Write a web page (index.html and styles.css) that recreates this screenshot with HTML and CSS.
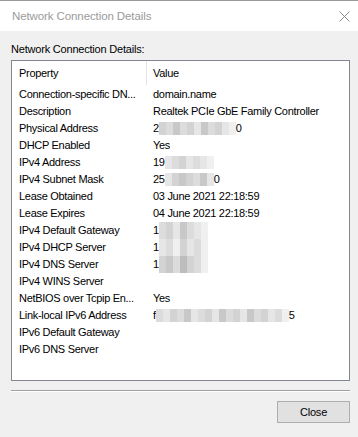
FILE: index.html
```html
<!DOCTYPE html>
<html>
<head>
<meta charset="utf-8">
<link rel="stylesheet" href="styles.css">
</head>
<body>
<div class="window">
  <div class="titlebar">
    <span class="title">Network Connection Details</span>
    <svg class="close-x" width="11" height="11" viewBox="0 0 11 11"><path d="M0.5 0.5 L10.5 10.5 M10.5 0.5 L0.5 10.5" stroke="#8a8a8a" stroke-width="1" fill="none"/></svg>
  </div>
  <div class="content">
    <div class="label">Network Connection Details:</div>
    <div class="listbox">
      <div class="header">
        <div class="hcell hprop">Property</div>
        <div class="hcell hval">Value</div>
      </div>
      <div class="rows">
        <div class="p">Connection-specific DN...</div><div class="v">domain.name</div>
        <div class="p">Description</div><div class="v">Realtek PCIe GbE Family Controller</div>
        <div class="p">Physical Address</div><div class="v">2<span class="mask m1"><i class="c2"></i><i class="c3"></i><i class="c1"></i><i class="c3"></i><i class="c2"></i><i class="c4"></i><i class="c1"></i><i class="c3"></i><i class="c2"></i><i class="c4"></i><i class="c5"></i></span>0</div>
        <div class="p">DHCP Enabled</div><div class="v">Yes</div>
        <div class="p">IPv4 Address</div><div class="v">19<span class="mask m2"><i class="c4"></i><i class="c3"></i><i class="c2"></i><i class="c4"></i><i class="c3"></i><i class="c4"></i><i class="c5"></i></span></div>
        <div class="p">IPv4 Subnet Mask</div><div class="v">25<span class="mask m2"><i class="c4"></i><i class="c2"></i><i class="c1"></i><i class="c2"></i><i class="c3"></i><i class="c1"></i><i class="c4"></i></span>0</div>
        <div class="p">Lease Obtained</div><div class="v">03 June 2021 22:18:59</div>
        <div class="p">Lease Expires</div><div class="v">04 June 2021 22:18:59</div>
        <div class="p">IPv4 Default Gateway</div><div class="v">1<span class="mask m3"><i class="c3"></i><i class="c2"></i><i class="c4"></i><i class="c1"></i><i class="c3"></i><i class="c4"></i><i class="c5"></i></span></div>
        <div class="p">IPv4 DHCP Server</div><div class="v">1<span class="mask m3"><i class="c4"></i><i class="c3"></i><i class="c5"></i><i class="c2"></i><i class="c4"></i><i class="c3"></i><i class="c5"></i></span></div>
        <div class="p">IPv4 DNS Server</div><div class="v">1<span class="mask m3 mlast"><i class="c2"></i><i class="c1"></i><i class="c3"></i><i class="c0"></i><i class="c2"></i><i class="c3"></i><i class="c5"></i></span></div>
        <div class="p">IPv4 WINS Server</div><div class="v"></div>
        <div class="p">NetBIOS over Tcpip En...</div><div class="v">Yes</div>
        <div class="p">Link-local IPv6 Address</div><div class="v">f<span class="mask m4"><i class="c3"></i><i class="c4"></i><i class="c2"></i><i class="c3"></i><i class="c1"></i><i class="c4"></i><i class="c3"></i><i class="c2"></i><i class="c4"></i><i class="c1"></i><i class="c3"></i><i class="c2"></i><i class="c4"></i><i class="c1"></i><i class="c3"></i><i class="c2"></i><i class="c4"></i><i class="c3"></i><i class="c5"></i></span>5</div>
        <div class="p">IPv6 Default Gateway</div><div class="v"></div>
        <div class="p">IPv6 DNS Server</div><div class="v"></div>
      </div>
    </div>
    <div class="separator"></div>
    <div class="footer">
      <button class="btn">Close</button>
    </div>
  </div>
</div>
</body>
</html>
```
FILE: styles.css
```css
html, body {
  margin: 0;
  padding: 0;
  background: #f0f0f0;
}
.window {
  width: 358px;
  height: 437px;
  box-sizing: border-box;
  border-top: 1px solid #9a9a9a;
  background: #f0f0f0;
  font-family: "Liberation Sans", Arial, sans-serif;
  font-size: 11px;
  letter-spacing: -0.3px;
  color: #000;
  overflow: hidden;
}
.titlebar {
  height: 30px;
  background: #fff;
  display: flex;
  align-items: center;
  justify-content: space-between;
  padding: 0 8px 0 12px;
}
.title {
  font-size: 11.5px;
  letter-spacing: -0.1px;
  color: #9b9b9b;
}
.close-x {
  display: block;
}
.content {
  padding: 0 8px 0 11px;
}
.label {
  margin-top: 11px;
  line-height: 15px;
  margin-bottom: 3px;
  letter-spacing: -0.2px;
}
.listbox {
  height: 321px;
  box-sizing: border-box;
  border: 1px solid #828790;
  background: #fff;
}
.header {
  display: flex;
  height: 24px;
  line-height: 24px;
}
.hprop {
  width: 135px;
  box-sizing: border-box;
  padding-left: 7px;
  border-right: 1px solid #e5e5e5;
}
.hval {
  padding-left: 6px;
}
.rows {
  display: grid;
  grid-template-columns: 135px 1fr;
  grid-auto-rows: 17px;
  line-height: 17px;
  padding-top: 1px;
}
.p {
  padding-left: 7px;
  white-space: nowrap;
  overflow: hidden;
}
.v {
  padding-left: 6px;
  white-space: nowrap;
}
.mask {
  display: inline-flex;
  vertical-align: top;
  margin-top: 2px;
  height: 13px;
}
.mask i {
  display: block;
  width: 7px;
  height: 100%;
}
.m3 {
  height: 17px;
  margin-top: 0;
}
.c0 { background: #bdbdbd; }
.c1 { background: #c8c8c8; }
.c2 { background: #d3d3d3; }
.c3 { background: #dcdcdc; }
.c4 { background: #e6e6e6; }
.c5 { background: #f0f0f0; }
.separator {
  margin-top: 9px;
  height: 0;
  border-top: 1px solid #a0a0a0;
  border-bottom: 1px solid #fff;
}
.footer {
  display: flex;
  justify-content: flex-end;
  margin-top: 9px;
}
.btn {
  width: 73px;
  height: 22px;
  box-sizing: border-box;
  background: #e1e1e1;
  border: 1px solid #adadad;
  border-radius: 0;
  padding: 0;
  font-family: "Liberation Sans", Arial, sans-serif;
  font-size: 11px;
  letter-spacing: -0.2px;
  color: #000;
}
```
